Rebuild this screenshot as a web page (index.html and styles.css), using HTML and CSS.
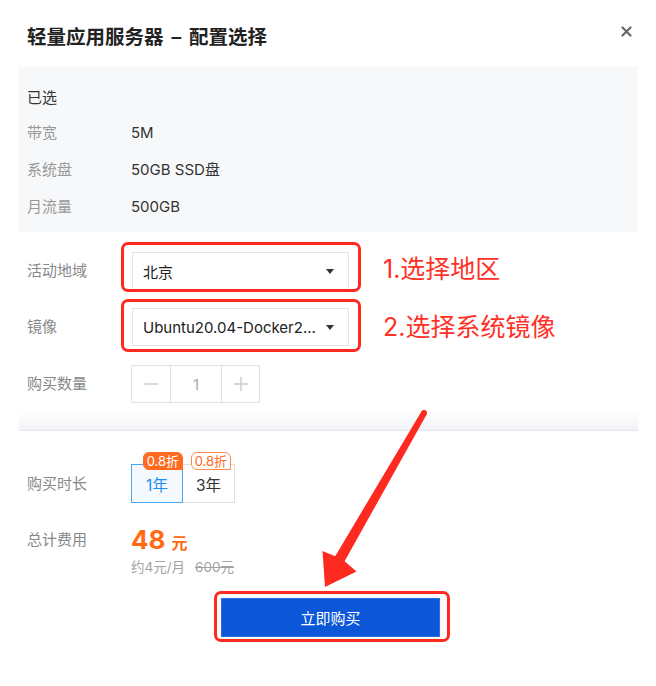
FILE: index.html
```html
<!DOCTYPE html>
<html lang="zh-CN">
<head>
<meta charset="utf-8">
<title>轻量应用服务器 – 配置选择</title>
<link rel="stylesheet" href="styles.css">
</head>
<body>
<div class="dialog">
  <header class="head">
    <h1 class="title">轻量应用服务器 – 配置选择</h1>
    <span class="close" aria-label="关闭">
      <svg width="11" height="11" viewBox="0 0 11 11"><path d="M1.5 1.5 L9.5 9.5 M9.5 1.5 L1.5 9.5" stroke="#666" stroke-width="2.2" stroke-linecap="round"/></svg>
    </span>
  </header>

  <section class="summary">
    <div class="summary-title">已选</div>
    <div class="spec-list">
      <div class="spec"><span class="spec-key">带宽</span><span class="spec-val">5M</span></div>
      <div class="spec"><span class="spec-key">系统盘</span><span class="spec-val">50GB SSD盘</span></div>
      <div class="spec"><span class="spec-key">月流量</span><span class="spec-val">500GB</span></div>
    </div>
  </section>

  <section class="form">
    <div class="row">
      <span class="label">活动地域</span>
      <div class="select mark mark-region">
        <span class="select-text">北京</span>
        <span class="caret"></span>
      </div>
      <span class="note">1.选择地区</span>
    </div>
    <div class="row">
      <span class="label">镜像</span>
      <div class="select mark mark-image">
        <span class="select-text">Ubuntu20.04-Docker2...</span>
        <span class="caret"></span>
      </div>
      <span class="note">2.选择系统镜像</span>
    </div>
    <div class="row row-qty">
      <span class="label">购买数量</span>
      <div class="stepper">
        <span class="step step-minus"><svg width="14" height="14" viewBox="0 0 14 14"><path d="M0 7 H14" stroke="#c9c9c9" stroke-width="1.4"/></svg></span>
        <span class="step-value">1</span>
        <span class="step step-plus"><svg width="14" height="14" viewBox="0 0 14 14"><path d="M0 7 H14 M7 0 V14" stroke="#c9c9c9" stroke-width="1.4"/></svg></span>
      </div>
    </div>
  </section>

  <div class="divider"></div>

  <section class="order">
    <div class="row row-duration">
      <span class="label">购买时长</span>
      <div class="options">
        <span class="option option-active">1年<span class="badge badge-fill">0.8折</span></span>
        <span class="option">3年<span class="badge badge-line">0.8折</span></span>
      </div>
    </div>
    <div class="row row-price">
      <span class="label label-price">总计费用</span>
      <div class="price-block">
        <div class="price"><span class="price-num">48</span><span class="price-unit">元</span></div>
        <div class="price-sub"><span>约4元/月</span><span class="price-old">600元</span></div>
      </div>
    </div>
  </section>

  <div class="actions">
    <button class="buy mark mark-buy" type="button">立即购买</button>
  </div>

  <svg class="arrow" width="656" height="686" viewBox="0 0 656 686">
    <polygon fill="#fe2a20" points="421.4,411.5 335.2,556.2 322.5,551 325,587 356.5,571.5 344.6,561.2 426.6,414.5"/>
    <circle cx="424" cy="413" r="3" fill="#fe2a20"/>
  </svg>
</div>
</body>
</html>
```

FILE: styles.css
```css
* { box-sizing: border-box; }

html, body {
  margin: 0;
  padding: 0;
  background: #ffffff;
}

body {
  font-family: "Inter", "Noto Sans CJK SC", sans-serif;
  font-size: 15px;
  color: #333333;
}

.dialog {
  position: relative;
  width: 656px;
  height: 686px;
  overflow: hidden;
}

/* header */
.head {
  display: flex;
  justify-content: space-between;
  align-items: flex-start;
  padding: 24px 24px 17px 27px;
}

.title {
  margin: 0;
  font-size: 19.5px;
  line-height: 26px;
  font-weight: 600;
  word-spacing: 3px;
  color: #222222;
}

.close {
  display: flex;
  margin-top: 2px;
}

/* selected summary */
.summary {
  margin: 0 18px 0 19px;
  padding: 21px 8px 15px;
  background: #f7f8fa;
}

.summary-title {
  line-height: 20px;
  color: #333333;
  margin-bottom: 15px;
}

.spec-list {
  display: flex;
  flex-direction: column;
  gap: 17px;
}

.spec {
  display: flex;
  line-height: 20px;
}

.spec-key {
  width: 104px;
  color: #999999;
}

.spec-val {
  color: #333333;
}

/* form rows */
.form {
  padding: 20px 0 0 27px;
  display: flex;
  flex-direction: column;
  gap: 18px;
}

.row {
  display: flex;
  align-items: center;
}

.row-qty {
  margin-top: 1px;
}

.label {
  width: 104px;
  flex: none;
  color: #888888;
  line-height: 20px;
}

.select {
  width: 217px;
  height: 38px;
  margin-left: 1px;
  display: flex;
  align-items: center;
  justify-content: space-between;
  padding: 0 14px 0 10px;
  border: 1px solid #e3e3e3;
  background: #ffffff;
  color: #222222;
}

.select-text {
  white-space: nowrap;
}

.caret {
  width: 0;
  height: 0;
  border-left: 4px solid transparent;
  border-right: 4px solid transparent;
  border-top: 5px solid #333333;
}

.note {
  margin-left: 34px;
  font-size: 25px;
  line-height: 30px;
  color: #ff3127;
}

.row:first-child .note {
  margin-top: -5px;
}

/* annotation frames */
.mark {
  position: relative;
}

.mark::after {
  content: "";
  position: absolute;
  border: 3px solid #fe2a20;
  border-radius: 7px;
  pointer-events: none;
}

.mark-region::after {
  left: -12px;
  right: -13px;
  top: -11px;
  bottom: -3px;
}

.mark-image::after {
  left: -12px;
  right: -13px;
  top: -10px;
  bottom: -7px;
}

.mark-buy::after {
  left: -8px;
  right: -11px;
  top: -8px;
  bottom: -6px;
}

/* stepper */
.stepper {
  display: flex;
  height: 38px;
  border: 1px solid #e2e2e2;
}

.step {
  width: 38px;
  display: flex;
  align-items: center;
  justify-content: center;
}

.step-plus {
  width: 38px;
  border-left: 1px solid #e2e2e2;
}

.step-value {
  width: 51px;
  display: flex;
  align-items: center;
  justify-content: center;
  border-left: 1px solid #e2e2e2;
  color: #aaaaaa;
}

/* divider */
.divider {
  margin: 7px 18px 0 19px;
  height: 21px;
  background: linear-gradient(to bottom, #ffffff, #f2f3f6);
  border-bottom: 1px solid #e3e6ec;
}

/* order */
.order {
  padding: 33px 0 0 27px;
  display: flex;
  flex-direction: column;
  gap: 22px;
}

.options {
  display: flex;
}

.option {
  position: relative;
  width: 53px;
  height: 39px;
  display: flex;
  align-items: center;
  justify-content: center;
  border: 1px solid #e0e0e0;
  margin-left: -1px;
  color: #333333;
  font-size: 15.5px;
}

.option-active {
  width: 52px;
  margin-left: 0;
  z-index: 1;
  border-color: #47a6f5;
  background: #f3f9ff;
  color: #1b8ef2;
}

.badge {
  position: absolute;
  top: -13px;
  height: 18px;
  padding: 0 3px;
  font-size: 13px;
  line-height: 16px;
  border-radius: 6px 6px 0 6px;
  white-space: nowrap;
}

.badge-fill {
  right: -1px;
  background: #ff6a1f;
  color: #ffffff;
  border: 1px solid #ff6a1f;
}

.badge-line {
  right: 3px;
  background: #ffffff;
  color: #ff6a1f;
  border: 1px solid #ff8a4f;
}

.row-price {
  align-items: flex-start;
}

.label-price {
  line-height: 30px;
}

.price {
  height: 30px;
  display: flex;
  align-items: baseline;
  color: #ff6a13;
}

.price-num {
  font-size: 26px;
  line-height: 30px;
  font-weight: 700;
}

.price-unit {
  margin-left: 6px;
  font-size: 16px;
  font-weight: 700;
}

.price-sub {
  margin-top: 3px;
  display: flex;
  gap: 10px;
  font-size: 13.5px;
  line-height: 18px;
  color: #a3a3a3;
}

.price-old {
  text-decoration: line-through;
}

/* action */
.actions {
  display: flex;
  justify-content: center;
  padding: 22px 0 0 5px;
}

.buy {
  width: 219px;
  height: 39px;
  border: 1px solid #2c6fe0;
  background: #0c57d8;
  color: #ffffff;
  font-family: "Inter", "Noto Sans CJK SC", sans-serif;
  font-size: 15px;
  box-shadow: 0 0 8px rgba(0, 0, 0, 0.08);
  cursor: pointer;
}

/* annotation arrow */
.arrow {
  position: absolute;
  left: 0;
  top: 0;
  pointer-events: none;
}
```
